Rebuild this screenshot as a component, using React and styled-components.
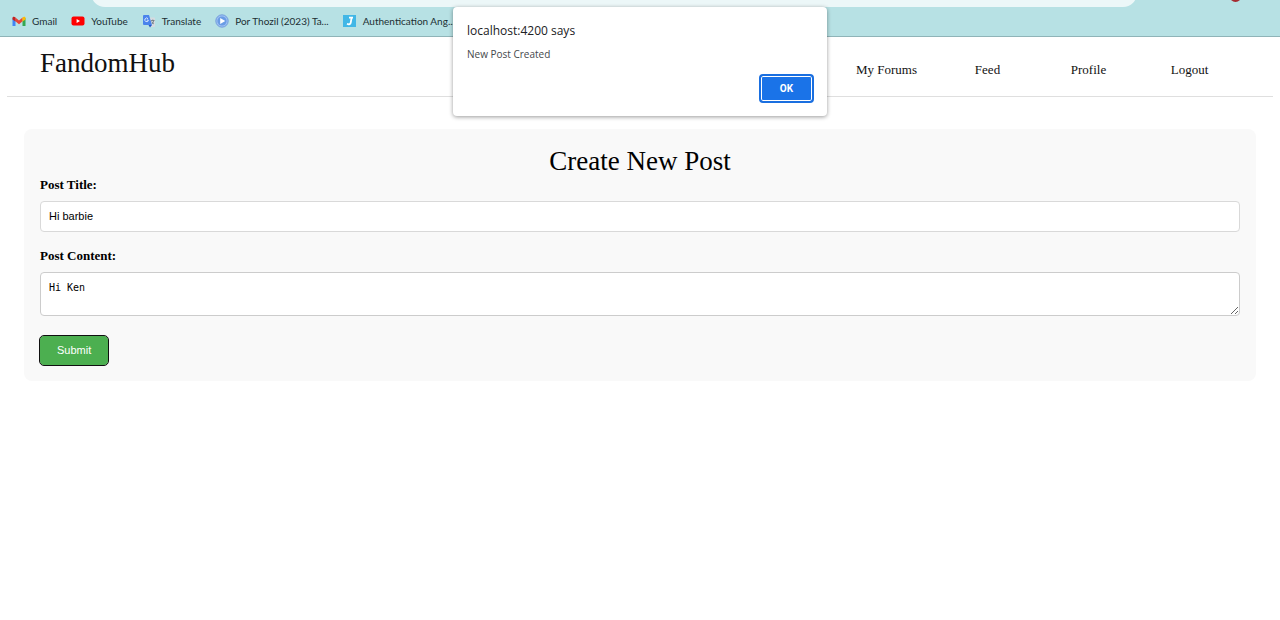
import React from "react";
import styled, { createGlobalStyle } from "styled-components";

const GlobalStyle = createGlobalStyle`
  *, *::before, *::after { box-sizing: border-box; }
  body { margin: 0; background: #fff; color: #000; font-family: "Liberation Serif", serif; }
`;

const Page = styled.div`
  position: relative;
`;

const BrowserBar = styled.div`
  display: flex;
  flex-direction: column;
  height: 37px;
  background: #b7e1e4;
  border-bottom: 1px solid #8fb4b8;
`;

const AddressRow = styled.div`
  display: flex;
  height: 7px;
  padding-left: 91px;
  overflow: hidden;
`;

const AddressBar = styled.div`
  flex: 1;
  height: 28px;
  margin-top: -21px;
  border-radius: 14px;
  background: #ecf7f8;
`;

const Actions = styled.div`
  display: flex;
  width: 143px;
  padding-left: 91px;
`;

const Bookmarks = styled.nav`
  display: flex;
  align-items: center;
  gap: 14px;
  height: 28px;
  padding-left: 12px;
`;

const Bookmark = styled.a`
  display: flex;
  align-items: center;
  gap: 6px;
  color: #1c2f33;
  font: 10px/14px Lato, "Noto Sans", sans-serif;
  white-space: nowrap;
  text-decoration: none;
`;

const Header = styled.header`
  display: flex;
  justify-content: space-between;
  height: 60px;
  margin: 0 7px;
  padding: 0 33px;
  border-bottom: 1px solid #dfdfdf;
`;

const Brand = styled.a`
  padding-top: 11px;
  color: #111;
  font-size: 27px;
  line-height: 30px;
  text-decoration: none;
`;

const Menu = styled.nav`
  display: grid;
  grid-template-columns: repeat(4, 101px);
  padding-top: 25px;
`;

const MenuLink = styled.a`
  color: #111;
  font-size: 13px;
  line-height: 16px;
  text-align: center;
  text-decoration: none;
`;

const Form = styled.form`
  display: flex;
  flex-direction: column;
  align-items: flex-start;
  margin: 32px 24px;
  padding: 16px;
  border-radius: 8px;
  background: #f9f9f9;
`;

const Title = styled.h1`
  align-self: stretch;
  margin: 0;
  font-size: 27px;
  font-weight: 400;
  line-height: 32px;
  text-align: center;
`;

const Label = styled.label`
  margin-bottom: 8px;
  font-size: 13px;
  font-weight: 700;
  line-height: 16px;
`;

const TextInput = styled.input`
  width: 100%;
  height: 31px;
  margin-bottom: 16px;
  padding: 0 8px 2px;
  border: 1px solid #d9d9d9;
  border-radius: 4px;
  background: #fff;
  color: #000;
  font: 11px "Liberation Sans", sans-serif;
`;

const TextArea = styled.textarea`
  display: block;
  width: 100%;
  height: 44px;
  margin-bottom: 20px;
  padding: 8px;
  border: 1px solid #ccc;
  border-radius: 4px;
  background: #fff;
  color: #000;
  font: 10px/14px "DejaVu Sans Mono", monospace;
  resize: vertical;
`;

const Submit = styled.button`
  height: 29px;
  padding: 0 17px 2px;
  border: 0;
  border-radius: 4px;
  outline: 1px solid #101010;
  background: #4caf50;
  color: #fff;
  font: 11px "Liberation Sans", sans-serif;
`;

const Dialog = styled.section`
  position: absolute;
  top: 7px;
  left: 50%;
  transform: translateX(-50%);
  display: flex;
  flex-direction: column;
  width: 374px;
  padding: 15px 13px 13px 14px;
  border-radius: 4px;
  background: #fff;
  box-shadow: 0 1px 4px rgba(0, 0, 0, 0.4);
  color: #202124;
  font-family: "Open Sans", "Noto Sans", sans-serif;
`;

const DialogTitle = styled.h2`
  margin: 0 0 7px;
  font-size: 12px;
  font-weight: 400;
  line-height: 18px;
`;

const DialogText = styled.p`
  margin: 0 0 13px;
  color: #45484c;
  font-size: 10px;
  line-height: 14px;
`;

const OkButton = styled.button`
  align-self: flex-end;
  width: 55px;
  height: 29px;
  border: 2px solid #1a6fe0;
  border-radius: 4px;
  background: #1a73e8;
  box-shadow: inset 0 0 0 1px #fff;
  color: #fff;
  font: 700 10px Roboto, "Noto Sans", sans-serif;
`;

const GmailIcon = () => (
  <svg width="14" height="11" viewBox="0 0 14 11" aria-hidden="true">
    <path d="M0.500 2v8h3V4z" fill="#4285f4" />
    <path d="M13.500 2v8h-3V4z" fill="#34a853" />
    <path d="M3.400 1.500 7 4.400l3.600-2.900v3.800L7 8.200 3.400 5.300z" fill="#ea4335" />
    <path d="M.5 3.500V2C.5.6 2.300.3 3.500 1.500v3.900z" fill="#c5221f" />
    <path d="M13.500 3.500V2c0-1.400-1.800-1.700-3-.5v3.900z" fill="#fbbc04" />
  </svg>
);

const YouTubeIcon = () => (
  <svg width="14" height="10" viewBox="0 0 14 10" aria-hidden="true">
    <rect x="0.500" y="0.500" width="13" height="9" rx="2" fill="#f00" />
    <path d="M5.600 3v4l3.400-2z" fill="#fff" />
  </svg>
);

const TranslateIcon = () => (
  <svg width="14" height="14" viewBox="0 0 14 14" aria-hidden="true">
    <path d="M5 3.500h7a1 1 0 0 1 1 1V12a1 1 0 0 1-1 1H8z" fill="#d5dbe0" />
    <path d="M2 1h5l3 10H2a1 1 0 0 1-1-1V2a1 1 0 0 1 1-1z" fill="#4a83ec" />
    <path d="M6.500 11 8 13.500 10 11z" fill="#2459c5" />
    <path d="M6 4.700a1.800 1.800 0 1 0 .4 1.400H4.800" fill="none" stroke="#e4eeff" strokeWidth="0.900" />
    <path d="M9 6.500h3.400M10.800 5.500v1M11.800 6.500c-.3 1.600-1 2.700-1.800 3.500M9.800 7.500c.5 1 1.100 1.800 2.100 2.500" fill="none" stroke="#69747c" strokeWidth="0.800" />
  </svg>
);

const PlayIcon = () => (
  <svg width="14" height="14" viewBox="0 0 14 14" aria-hidden="true">
    <circle cx="7" cy="7" r="6.200" fill="#9dc0f3" stroke="#6590d8" strokeWidth="0.800" />
    <circle cx="7" cy="7" r="4.600" fill="#6a9ce5" />
    <path d="M5.200 3.900v6.200L10.200 7z" fill="#fff" />
  </svg>
);

const JIcon = () => (
  <svg width="14" height="12" viewBox="0 0 14 12" aria-hidden="true">
    <rect width="13" height="12" fill="#42b7e6" />
    <path d="M6 2.700h4M8.600 2.700 7.800 7.300C7.500 9.300 6 9.800 4 8.800" fill="none" stroke="#fff" strokeWidth="1.800" />
  </svg>
);

const bookmarks = [
  [GmailIcon, "Gmail"],
  [YouTubeIcon, "YouTube"],
  [TranslateIcon, "Translate"],
  [PlayIcon, "Por Thozil (2023) Ta..."],
  [JIcon, "Authentication Ang..."],
];

export default function App() {
  return (
    <Page>
      <GlobalStyle />
      <BrowserBar>
        <AddressRow>
          <AddressBar />
          <Actions>
            <svg width="14" height="3" viewBox="0 0 14 3" aria-hidden="true">
              <path d="M3 0h9Q7.500 4 3 0z" fill="#a52a30" />
            </svg>
          </Actions>
        </AddressRow>
        <Bookmarks aria-label="Bookmarks">
          {bookmarks.map(([Icon, name]) => (
            <Bookmark href="#" key={name}>
              <Icon />
              {name}
            </Bookmark>
          ))}
        </Bookmarks>
      </BrowserBar>
      <Header>
        <Brand href="#">FandomHub</Brand>
        <Menu aria-label="Main">
          {["My Forums", "Feed", "Profile", "Logout"].map((item) => (
            <MenuLink href="#" key={item}>{item}</MenuLink>
          ))}
        </Menu>
      </Header>
      <main>
        <Form onSubmit={(event) => event.preventDefault()}>
          <Title>Create New Post</Title>
          <Label htmlFor="post-title">Post Title:</Label>
          <TextInput id="post-title" type="text" defaultValue="Hi barbie" />
          <Label htmlFor="post-content">Post Content:</Label>
          <TextArea id="post-content" defaultValue="Hi Ken" />
          <Submit type="submit">Submit</Submit>
        </Form>
      </main>
      <Dialog role="alertdialog" aria-labelledby="dialog-title" aria-describedby="dialog-text">
        <DialogTitle id="dialog-title">localhost:4200 says</DialogTitle>
        <DialogText id="dialog-text">New Post Created</DialogText>
        <OkButton type="button">OK</OkButton>
      </Dialog>
    </Page>
  );
}
